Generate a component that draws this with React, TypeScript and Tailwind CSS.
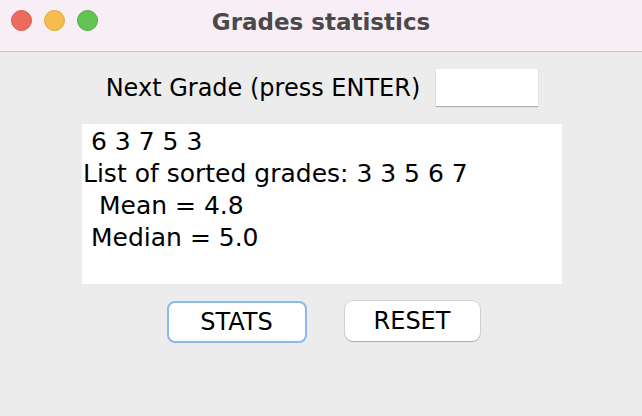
export default function App() {
  const font = { fontFamily: '"DejaVu Sans", "Liberation Sans", sans-serif' }
  return (
    <div className="flex h-[416px] w-[642px] flex-col overflow-hidden bg-[#ececec]" style={font}>
      <div className="relative flex h-[52px] shrink-0 items-start justify-center border-b border-[#c9c6c9] bg-[#f7eff5]">
        <div className="absolute left-[11px] top-[10px] flex gap-[12px]">
          <span className="h-[21px] w-[21px] rounded-full border border-[#dd5650] bg-[#ee6a5f]" />
          <span className="h-[21px] w-[21px] rounded-full border border-[#dda43a] bg-[#f5bd4f]" />
          <span className="h-[21px] w-[21px] rounded-full border border-[#4eaa3f] bg-[#61c554]" />
        </div>
        <span className="mt-[5px] text-[23px] font-bold text-[#4b484b]">Grades statistics</span>
      </div>
      <div className="flex flex-col items-center pl-[2px]">
        <div className="mt-[17px] flex items-center gap-[16px]">
          <span className="text-[24px] text-black">Next Grade (press ENTER)</span>
          <div className="h-[37px] w-[102px] bg-white shadow-[0_1px_1px_rgba(0,0,0,0.25)]" />
        </div>
        <div className="mt-[18px] flex h-[160px] w-[480px] flex-col bg-white pt-[2px] text-[25px] leading-[32px] text-black">
          <span className="pl-[9px]">6 3 7 5 3</span>
          <span className="pl-[1px]">List of sorted grades: 3 3 5 6 7</span>
          <span className="pl-[17px]">Mean = 4.8</span>
          <span className="pl-[9px]">Median = 5.0</span>
        </div>
        <div className="mt-[17px] flex gap-[38px] pl-[2px]">
          <button className="h-[42px] w-[140px] rounded-[8px] border-[2px] border-[#8ab8ee] bg-white text-[24px] text-black">
            STATS
          </button>
          <button className="h-[40px] w-[135px] rounded-[8px] bg-white text-[24px] text-black shadow-[0_0_0_1px_rgba(0,0,0,0.1),0_1px_1px_rgba(0,0,0,0.2)]">
            RESET
          </button>
        </div>
      </div>
    </div>
  )
}
